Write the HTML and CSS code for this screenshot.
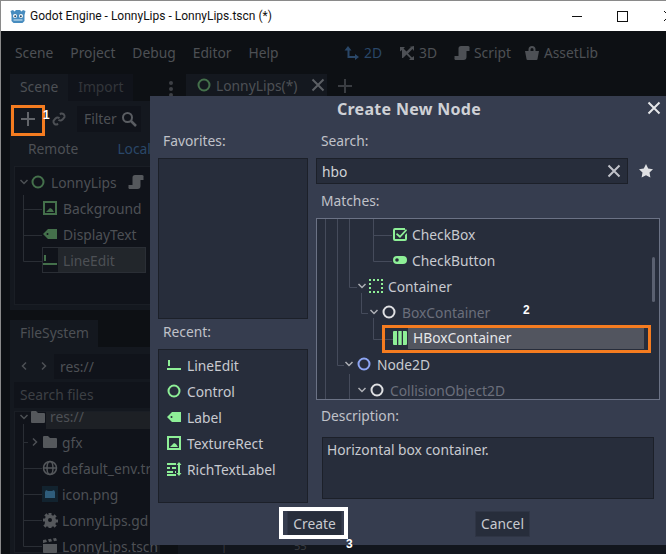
FILE: index.html
```html
<!DOCTYPE html>
<html lang="en">
<head>
  <meta charset="UTF-8">
  <title>Godot Engine - LonnyLips - LonnyLips.tscn (*)</title>
  <link rel="stylesheet" href="styles.css">
</head>
<body>
  <svg class="sprite" xmlns="http://www.w3.org/2000/svg">
    <symbol id="i-line" viewBox="0 0 16 16"><path d="M2 3h2v6H2zM1 11h14v2H1z" fill="currentColor"/></symbol>
    <symbol id="i-node" viewBox="0 0 16 16"><circle cx="8" cy="8" r="5.500" fill="none" stroke="currentColor" stroke-width="2"/></symbol>
    <symbol id="i-label" viewBox="0 0 16 16"><path fill-rule="evenodd" d="M6 3h9v10H6L1 8zM5.500 7a1 1 0 1 0 0 2 1 1 0 0 0 0-2z" fill="currentColor"/></symbol>
    <symbol id="i-tex" viewBox="0 0 16 16"><path fill-rule="evenodd" d="M1 1h14v14H1zM3 3v10h10V3z" fill="currentColor"/><path d="M4 12l3-3 1-1 2 1 2 3z" fill="currentColor"/></symbol>
    <symbol id="i-rich" viewBox="0 0 16 16"><path d="M1 2h9v2H1zM1 6h3v2H1zM6 6h4v2H6zM1 10h6v2H1zM9 10h1v2H9zM1 13h9v2H1zM13 1l2.500 3H14v8h1.500L13 15l-2.500-3H12V4h-1.500z" fill="currentColor"/></symbol>
    <symbol id="i-check" viewBox="0 0 16 16"><path d="M3 2h10v2H3v9h10V9l2-2v6a2 2 0 0 1-2 2H3a2 2 0 0 1-2-2V4a2 2 0 0 1 2-2z" fill="currentColor"/><path d="M5 7l3 2.500L14 3l1 1.500L8 12 4 8.500z" fill="currentColor"/></symbol>
    <symbol id="i-toggle" viewBox="0 0 16 16"><path fill-rule="evenodd" d="M5 4h6a4 4 0 0 1 0 8H5a4 4 0 0 1 0-8zM5 6.200a1.800 1.800 0 1 0 0 3.600 1.800 1.800 0 0 0 0-3.600z" fill="currentColor"/></symbol>
    <symbol id="i-dash" viewBox="0 0 16 16"><path d="M1 1h2v2H1zM5 1h2v2H5zM9 1h2v2H9zM13 1h2v2h-2zM1 5h2v2H1zM13 5h2v2h-2zM1 9h2v2H1zM13 9h2v2h-2zM1 13h2v2H1zM5 13h2v2H5zM9 13h2v2H9zM13 13h2v2h-2z" fill="currentColor"/></symbol>
    <symbol id="i-hbox" viewBox="0 0 16 16"><path d="M2 1h3v14H2a1 1 0 0 1-1-1V2a1 1 0 0 1 1-1zM6.300 1h3.400v14H6.300zM11 1h3a1 1 0 0 1 1 1v12a1 1 0 0 1-1 1h-3z" fill="currentColor"/></symbol>
    <symbol id="i-script" viewBox="0 0 16 16"><path d="M7 1h7a1.500 1.500 0 0 1 1.500 2v3h-3v6a3 3 0 0 1-3 3H2a1.500 1.500 0 0 1-1.500-2v-2h4V3.500A2.500 2.500 0 0 1 7 1z" fill="currentColor"/></symbol>
    <symbol id="i-bag" viewBox="0 0 16 16"><path fill-rule="evenodd" d="M8 1a3.500 3.500 0 0 1 3.500 3.500V6H15l-1.500 8a1 1 0 0 1-1 1h-9a1 1 0 0 1-1-1L1 6h3.500V4.500A3.500 3.500 0 0 1 8 1zm0 2a1.500 1.500 0 0 0-1.500 1.500V6h3V4.500A1.500 1.500 0 0 0 8 3z" fill="currentColor"/></symbol>
    <symbol id="i-2d" viewBox="0 0 16 16"><path d="M4 1l3.500 4.500H5.500V11H11V9l4 3-4 3v-2H3.500V5.500H.500z" fill="currentColor"/></symbol>
    <symbol id="i-3d" viewBox="0 0 16 16"><path d="M1 2h5L4.500 3.500 7.500 6.500 12 2H10l5-1v5l-1.500-2-4.500 4.500 4 4L15 11v4h-5l1.500-1.500-4-4L4 13h-1V5L1 6.500z" fill="currentColor"/></symbol>
    <symbol id="i-folder" viewBox="0 0 16 16"><path d="M2 2h4l2 2h6a1 1 0 0 1 1 1v8a1 1 0 0 1-1 1H2a1 1 0 0 1-1-1V3a1 1 0 0 1 1-1z" fill="currentColor"/></symbol>
    <symbol id="i-globe" viewBox="0 0 16 16"><g fill="none" stroke="currentColor" stroke-width="1.500"><circle cx="8" cy="8" r="6.500"/><ellipse cx="8" cy="8" rx="3" ry="6.500"/><path d="M1.500 8h13"/></g></symbol>
    <symbol id="i-gear" viewBox="0 0 16 16"><path fill-rule="evenodd" d="M6.500 1h3v2l1.700.7 1.400-1.400 2.100 2.100-1.400 1.400.7 1.700h2v3h-2l-.7 1.700 1.400 1.400-2.100 2.100-1.400-1.400-1.700.7v2h-3v-2l-1.700-.7-1.400 1.400-2.100-2.100 1.400-1.400L3 9.500H1v-3h2l.7-1.700-1.400-1.400 2.100-2.100 1.400 1.400L6.500 3zM8 6a2 2 0 1 0 0 4 2 2 0 0 0 0-4z" fill="currentColor"/></symbol>
    <symbol id="i-clap" viewBox="0 0 16 16"><path d="M1 6h14v8a1 1 0 0 1-1 1H2a1 1 0 0 1-1-1zM1 2l3-.5L5 4 1 5zM6 1.200L9 .7 10 3.300 7 4zM11 .5l3-.5 1 2.600-3 .7z" fill="currentColor"/></symbol>
    <symbol id="i-link" viewBox="0 0 16 16"><g fill="none" stroke="currentColor" stroke-width="2"><path d="M9 3.500l1-1a3 3 0 0 1 3.500 3.500l-2 2.500a3 3 0 0 1-4 .2"/><path d="M7 12.500l-1 1a3 3 0 0 1-3.500-3.500l2-2.500a3 3 0 0 1 4-.2"/></g></symbol>
    <symbol id="i-search" viewBox="0 0 16 16"><circle cx="6.500" cy="6.500" r="4.500" fill="none" stroke="currentColor" stroke-width="2"/><path d="M10 10l5 5" stroke="currentColor" stroke-width="2.500"/></symbol>
    <symbol id="i-x" viewBox="0 0 16 16"><path d="M2.500 2.500l11 11M13.500 2.500l-11 11" stroke="currentColor" stroke-width="2" fill="none"/></symbol>
    <symbol id="i-plus" viewBox="0 0 16 16"><path d="M7 1h2v6h6v2H9v6H7V9H1V7h6z" fill="currentColor"/></symbol>
    <symbol id="i-star" viewBox="0 0 16 16"><path d="M8 1l2.200 4.500 4.800.7-3.500 3.400.9 4.900L8 12.200l-4.400 2.300.9-4.900L1 6.200l4.800-.7z" fill="currentColor"/></symbol>
    <symbol id="i-down" viewBox="0 0 10 10"><path d="M1.500 3L5 6.500 8.500 3" fill="none" stroke="currentColor" stroke-width="1.500"/></symbol>
    <symbol id="i-right" viewBox="0 0 10 10"><path d="M3 1.500L6.500 5 3 8.500" fill="none" stroke="currentColor" stroke-width="1.500"/></symbol>
    <symbol id="i-left" viewBox="0 0 10 10"><path d="M7 1.500L3.500 5 7 8.500" fill="none" stroke="currentColor" stroke-width="1.500"/></symbol>
  </svg>

  <header class="titlebar">
    <svg class="app-icon" viewBox="0 0 16 16"><path d="M1.500 7L.500 3l2.500-1 1.500 1.500L6 2h4l1.500 1.500L13 2l2.500 1-1 4v6l-2 2h-9l-2-2z" fill="#478cbf"/><circle cx="5" cy="8" r="2" fill="#fff"/><circle cx="11" cy="8" r="2" fill="#fff"/><circle cx="5.200" cy="8.200" r="1" fill="#2f4a5e"/><circle cx="10.800" cy="8.200" r="1" fill="#2f4a5e"/><path d="M3.500 12h9" stroke="#dcecf6"/></svg>
    <span class="title-text">Godot Engine - LonnyLips - LonnyLips.tscn (*)</span>
    <div class="win-btns">
      <span class="win-min"></span>
      <span class="win-max"></span>
      <svg class="win-close" viewBox="0 0 12 12"><path d="M1 1l10 10M11 1L1 11" stroke="#111" fill="none"/></svg>
    </div>
  </header>

  <nav class="menubar">
    <div class="menus">
      <span>Scene</span><span>Project</span><span>Debug</span><span>Editor</span><span>Help</span>
    </div>
    <div class="modes">
      <span class="mode active"><svg class="ico"><use href="#i-2d"/></svg>2D</span>
      <span class="mode"><svg class="ico"><use href="#i-3d"/></svg>3D</span>
      <span class="mode"><svg class="ico"><use href="#i-script"/></svg>Script</span>
      <span class="mode"><svg class="ico"><use href="#i-bag"/></svg>AssetLib</span>
    </div>
  </nav>

  <main class="workspace">
    <aside class="dock">
      <div class="tabs">
        <span class="tab on">Scene</span>
        <span class="tab">Import</span>
      </div>
      <section class="panel scene-panel">
        <div class="tools">
          <svg class="ico tool-plus"><use href="#i-plus"/></svg>
          <svg class="ico tool-link"><use href="#i-link"/></svg>
          <div class="filter">Filter<svg class="ico"><use href="#i-search"/></svg></div>
        </div>
        <div class="remote-row"><span>Remote</span><span class="blue">Local</span></div>
        <div class="inner scene-tree">
          <svg class="guides" width="134" height="137"><path d="M8.500 28V94.500H27M8.500 42.500H27M8.500 68.500H27" fill="none" stroke="#2a2e35"/></svg>
          <div class="srow root"><svg class="arrow"><use href="#i-down"/></svg><svg class="ico green"><use href="#i-node"/></svg><span>LonnyLips</span><svg class="ico script-badge"><use href="#i-script"/></svg></div>
          <div class="srow child"><svg class="ico green"><use href="#i-tex"/></svg><span>Background</span></div>
          <div class="srow child"><svg class="ico green"><use href="#i-label"/></svg><span>DisplayText</span></div>
          <div class="srow child picked"><svg class="ico green"><use href="#i-line"/></svg><span>LineEdit</span></div>
        </div>
      </section>
      <div class="tabs fs-tabs">
        <span class="tab on">FileSystem</span>
      </div>
      <section class="panel fs-panel">
        <div class="path-row">
          <svg class="arrow"><use href="#i-left"/></svg>
          <svg class="arrow"><use href="#i-right"/></svg>
          <div class="path">res://</div>
        </div>
        <div class="search-files">Search files</div>
        <div class="inner fs-tree">
          <svg class="guides" width="134" height="142"><path d="M8.500 12V134.500H27M8.500 30.500H13M8.500 56.500H27M8.500 82.500H27M8.500 108.500H27" fill="none" stroke="#2a2e35"/></svg>
          <div class="frow root"><svg class="arrow"><use href="#i-down"/></svg><svg class="ico"><use href="#i-folder"/></svg><span>res://</span></div>
          <div class="frow child"><svg class="arrow"><use href="#i-right"/></svg><svg class="ico"><use href="#i-folder"/></svg><span>gfx</span></div>
          <div class="frow file"><svg class="ico"><use href="#i-globe"/></svg><span>default_env.tres</span></div>
          <div class="frow file"><svg class="ico icon-png" viewBox="0 0 16 16"><rect width="16" height="16" fill="#12232f"/><path d="M3 6l1-2 2 1h4l2-1 1 2v6H3z" fill="#2f5d7c"/></svg><span>icon.png</span></div>
          <div class="frow file"><svg class="ico"><use href="#i-gear"/></svg><span>LonnyLips.gd</span></div>
          <div class="frow file"><svg class="ico"><use href="#i-clap"/></svg><span>LonnyLips.tscn</span></div>
        </div>
      </section>
    </aside>

    <section class="main-area">
      <div class="dots"><i></i><i></i><i></i></div>
      <div class="scene-tab"><svg class="ico green"><use href="#i-node"/></svg><span>LonnyLips(*)</span><svg class="ico tab-x"><use href="#i-x"/></svg></div>
      <svg class="ico tab-plus"><use href="#i-plus"/></svg>
      <div class="viewport"><span class="tick">|</span><span class="ruler">55</span></div>
    </section>
  </main>

  <div class="dialog">
    <div class="dialog-title">Create New Node</div>
    <svg class="ico dialog-close"><use href="#i-x"/></svg>
    <div class="dialog-body">
      <div class="col-left">
        <label class="lbl">Favorites:</label>
        <div class="box favorites"></div>
        <label class="lbl">Recent:</label>
        <div class="box recent">
          <div class="item"><svg class="ico mint"><use href="#i-line"/></svg>LineEdit</div>
          <div class="item"><svg class="ico mint"><use href="#i-node"/></svg>Control</div>
          <div class="item"><svg class="ico mint"><use href="#i-label"/></svg>Label</div>
          <div class="item"><svg class="ico mint"><use href="#i-tex"/></svg>TextureRect</div>
          <div class="item"><svg class="ico mint"><use href="#i-rich"/></svg>RichTextLabel</div>
        </div>
      </div>
      <div class="col-right">
        <label class="lbl">Search:</label>
        <div class="search-row">
          <div class="box search-input"><span>hbo</span><svg class="ico clear"><use href="#i-x"/></svg></div>
          <svg class="ico fav"><use href="#i-star"/></svg>
        </div>
        <label class="lbl">Matches:</label>
        <div class="box matches">
          <svg class="guides" width="342" height="180"><path d="M8.500 0V180M20.500 0V146.500H27M32.500 0V68.500H40M44.500 74V94.500H51M56.500 0V42.500H75M56.500 16.500H75M56.500 99V120.500H76M32.500 155V180" fill="none" stroke="#454b5b"/></svg>
          <div class="node d4"><svg class="ico mint"><use href="#i-check"/></svg>CheckBox</div>
          <div class="node d4"><svg class="ico mint"><use href="#i-toggle"/></svg>CheckButton</div>
          <div class="node d2"><svg class="arrow"><use href="#i-down"/></svg><svg class="ico mint"><use href="#i-dash"/></svg>Container</div>
          <div class="node d3 muted"><svg class="arrow"><use href="#i-down"/></svg><svg class="ico white round"><use href="#i-node"/></svg>BoxContainer</div>
          <div class="node d4 sel"><svg class="ico mint"><use href="#i-hbox"/></svg><span class="sel-text">HBoxContainer</span></div>
          <div class="node d1"><svg class="arrow"><use href="#i-down"/></svg><svg class="ico bluei round"><use href="#i-node"/></svg>Node2D</div>
          <div class="node d2 muted"><svg class="arrow"><use href="#i-down"/></svg><svg class="ico white round"><use href="#i-node"/></svg>CollisionObject2D</div>
          <div class="scrollbar"></div>
        </div>
        <label class="lbl">Description:</label>
        <div class="box description">Horizontal box container.</div>
      </div>
    </div>
    <div class="dialog-foot">
      <button class="btn">Create</button>
      <button class="btn">Cancel</button>
    </div>
  </div>

  <div class="mark mark-add"></div>
  <div class="mark mark-node"></div>
  <div class="mark mark-create"></div>
  <span class="num num1">1</span>
  <span class="num num2">2</span>
  <span class="num num3">3</span>
</body>
</html>
```

FILE: styles.css
```css
* {
  box-sizing: border-box;
}
html, body {
  margin: 0;
  height: 554px;
  overflow: hidden;
}
body {
  position: relative;
  width: 666px;
  font-family: "Noto Sans", sans-serif;
  font-size: 13.800px;
  background: #0d1014;
  color: #4d5055;
  border-left: 1px solid #8a8a8a;
}
.sprite {
  position: absolute;
  width: 0;
  height: 0;
}
.ico {
  width: 16px;
  height: 16px;
  flex: none;
}
.arrow {
  width: 10px;
  height: 10px;
  flex: none;
}
.green {
  color: #44704b;
}
.mint {
  color: #8eef97;
}
.white {
  color: #dfe0e3;
}
.bluei {
  color: #8da5f3;
}
.blue {
  color: #2a4768;
}

/* window title */
.titlebar {
  height: 31px;
  background: #fff;
  border-top: 1px solid #8a8a8a;
  display: flex;
  align-items: center;
  padding-left: 9px;
  color: #111;
  font-family: Roboto, sans-serif;
  font-size: 12px;
}
.app-icon {
  width: 16px;
  height: 16px;
  margin-right: 4px;
}
.win-btns {
  margin-left: auto;
  display: flex;
  align-items: center;
  gap: 35px;
  margin-right: -9px;
}
.win-min {
  width: 10px;
  height: 1px;
  background: #111;
}
.win-max {
  width: 11px;
  height: 11px;
  border: 1px solid #111;
}
.win-close {
  width: 12px;
  height: 12px;
}

/* editor top bar */
.menubar {
  height: 43px;
  display: flex;
  align-items: center;
  justify-content: space-between;
  padding: 0 0 0 14px;
}
.menus {
  display: flex;
  gap: 17px;
}
.modes {
  display: flex;
  gap: 17px;
  padding-right: 68px;
}
.mode {
  display: flex;
  align-items: center;
  gap: 4px;
}
.mode:last-child {
  margin-left: -4px;
}
.mode.active {
  color: #2a4768;
}

.workspace {
  display: flex;
  height: 480px;
}
.dock {
  width: 150px;
  margin-left: 9px;
  flex: none;
}
.tabs {
  display: flex;
  height: 27px;
}
.tab {
  padding: 0 10px;
  line-height: 26px;
  color: #33363b;
  background: #10131a;
}
.tab.on {
  color: #4d5055;
  background: #14181f;
}
.panel {
  background: #14181f;
  padding: 4px;
}
.scene-panel {
  height: 209px;
}
.tools {
  height: 27px;
  display: flex;
  align-items: center;
}
.tool-plus {
  margin-left: 6px;
  color: #62656a;
}
.tool-link {
  margin-left: 15px;
  color: #4d5055;
}
.filter {
  margin-left: 10px;
  width: 64px;
  height: 26px;
  padding: 0 7px;
  background: #10131a;
  display: flex;
  align-items: center;
  gap: 4px;
  overflow: hidden;
}
.filter .ico {
  color: #5a5d62;
}
.remote-row {
  height: 34px;
  padding: 0 0 2px 14px;
  display: flex;
  align-items: center;
  gap: 39px;
}
.inner {
  position: relative;
  background: #10131a;
  border: 1px solid #1a1e25;
}
.guides {
  position: absolute;
  left: 0;
  top: 0;
}
.scene-tree {
  height: 139px;
  padding-top: 2px;
}
.srow {
  height: 26px;
  display: flex;
  align-items: center;
  position: relative;
}
.srow.root {
  padding-left: 4px;
}
.srow.root .arrow {
  margin-right: 1px;
}
.srow.root .ico {
  margin-right: 5px;
}
.srow.root .script-badge {
  margin: 0 11px 0 auto;
  color: #55585c;
}
.srow.child {
  margin-left: 27px;
}
.srow.child .ico {
  margin-right: 5px;
}
.picked {
  width: 104px;
  background: linear-gradient(to right, #10131a 16px, #22262b 16px);
  box-shadow: inset 0 0 0 1px #2a2e35;
}
.fs-tabs {
  margin-top: 10px;
}
.fs-tabs .tab {
  width: 88px;
}
.fs-panel {
  height: 207px;
  padding-top: 6px;
}
.path-row {
  height: 26px;
  display: flex;
  align-items: center;
  padding-left: 5px;
  gap: 10px;
}
.path {
  flex: 1;
  height: 25px;
  line-height: 25px;
  background: #10131a;
  padding-left: 6px;
  margin: 0 0 0 -5px;
}
.search-files {
  height: 26px;
  line-height: 26px;
  margin-top: 3px;
  padding-left: 6px;
  background: #10131a;
  color: #3d4045;
}
.fs-tree {
  margin-top: 3px;
  height: 142px;
}
.frow {
  height: 26px;
  display: flex;
  align-items: center;
  white-space: nowrap;
  position: relative;
}
.frow.root {
  height: 17px;
  padding: 0 0 8px 4px;
  background: linear-gradient(to right, transparent 31px, #1d2025 31px);
}
.frow.root .arrow {
  margin-right: 1px;
}
.frow.root .ico {
  margin-right: 4px;
}
.frow.child {
  padding-left: 15px;
}
.frow.child .arrow {
  margin-right: 2px;
}
.frow .ico {
  color: #55585c;
}
.frow.child .ico,
.frow.file .ico {
  margin-right: 4px;
}
.frow.file {
  padding-left: 27px;
}
.main-area {
  position: relative;
  flex: 1;
  display: flex;
  align-items: flex-start;
}
.dots {
  width: 5px;
  margin: 7px 0 0 9px;
  display: flex;
  flex-direction: column;
  gap: 2px;
}
.dots i {
  width: 4px;
  height: 4px;
  border-radius: 50%;
  background: #3d4045;
}
.scene-tab {
  margin-left: 12px;
  width: 141px;
  height: 22px;
  background: #14181f;
  display: flex;
  align-items: center;
  padding: 0 1px 0 10px;
  gap: 4px;
}
.tab-x {
  margin-left: auto;
  color: #5c5f64;
}
.tab-plus {
  margin: 4px 0 0 10px;
  color: #3a3d42;
}
.viewport {
  position: absolute;
  left: 18px;
  right: 0;
  top: 22px;
  bottom: 0;
  background: #12161d;
}
.tick,
.ruler {
  position: absolute;
  bottom: 0;
  line-height: 16px;
  font-size: 11px;
  color: #3a3d42;
}
.tick {
  left: 43px;
}
.ruler {
  left: 116px;
}

/* Create New Node dialog */
.dialog {
  position: absolute;
  left: 149px;
  top: 96px;
  width: 516px;
  height: 449px;
  background: #363d4f;
  color: #c8cad0;
  display: flex;
  flex-direction: column;
}
.dialog-title {
  height: 32px;
  padding: 1px 0 0 2px;
  line-height: 24px;
  text-align: center;
  font-weight: bold;
  font-size: 16px;
  letter-spacing: 0.3px;
  color: #cfd1d6;
}
.dialog-close {
  position: absolute;
  right: 4px;
  top: 4px;
  color: #e6e7ea;
}
.dialog-body {
  display: grid;
  grid-template-columns: 150px 344px;
  gap: 8px;
  padding: 0 6px 0 8px;
}
.lbl {
  display: block;
  height: 26px;
  line-height: 26px;
  padding-left: 5px;
  color: #c0c2c9;
}
.box {
  background: #272d3b;
  border: 1px solid #1c2029;
}
.col-left .lbl + .box {
  margin-top: 4px;
}
.col-right .lbl + * {
  margin-top: 4px;
}
.favorites {
  height: 161px;
}
.recent {
  height: 154px;
  padding: 2px 0 0 7px;
}
.item {
  height: 26px;
  display: flex;
  align-items: center;
  gap: 5px;
}
.search-row {
  display: flex;
  align-items: center;
}
.search-input {
  width: 312px;
  height: 26px;
  display: flex;
  align-items: center;
  justify-content: space-between;
  padding: 0 5px;
  color: #d0d2d6;
}
.clear {
  color: #c0c2c9;
}
.fav {
  margin-left: 10px;
  color: #dfe0e3;
}
.col-right .lbl:nth-of-type(2) {
  margin-top: 4px;
}
.matches {
  position: relative;
  height: 182px;
  padding-top: 2px;
  overflow: hidden;
  border-color: #6b7285;
}
.node {
  position: relative;
  height: 26px;
  display: flex;
  align-items: center;
  gap: 4px;
  white-space: nowrap;
}
.node .arrow {
  margin-right: -3px;
  color: #aeb0b6;
}
.round {
  margin: 0 1px;
}
.d1 {
  padding-left: 27px;
}
.d2 {
  padding-left: 40px;
}
.d3 {
  padding-left: 52px;
}
.d4 {
  padding-left: 75px;
}
.muted {
  color: #6b6f7b;
}
.sel {
  color: #e6e7ea;
}
.sel-text {
  position: absolute;
  left: 91px;
  right: 15px;
  top: 2px;
  bottom: 2px;
  padding-left: 5px;
  line-height: 22px;
  background: #52555f;
}
.scrollbar {
  position: absolute;
  right: 4px;
  top: 38px;
  width: 3px;
  height: 45px;
  border-radius: 2px;
  background: #5a6070;
}
.col-right .lbl:nth-of-type(3) {
  margin-top: 3px;
}
.col-right .description {
  margin: 8px 6px 0;
  height: 62px;
  padding: 2px 4px;
}
.dialog-foot {
  display: flex;
  gap: 133px;
  padding: 8px 0 0 137px;
}
.btn {
  width: 55px;
  height: 26px;
  padding: 0 0 1px;
  font: inherit;
  color: #c8cad0;
  background: #272d3b;
  border: 1px solid #2f3545;
}

/* tutorial annotations */
.mark {
  position: absolute;
}
.mark-add {
  left: 10px;
  top: 105px;
  width: 34px;
  height: 31px;
  border: 3px solid #f57c20;
}
.mark-node {
  left: 381px;
  top: 325px;
  width: 269px;
  height: 28px;
  border: 3px solid #f57c20;
}
.mark-create {
  left: 278px;
  top: 507px;
  width: 69px;
  height: 32px;
  border: 4px solid #fff;
}
.num {
  position: absolute;
  font-family: "Liberation Sans", sans-serif;
  font-size: 12px;
  font-weight: bold;
  color: #fff;
  line-height: 14px;
}
.num1 {
  left: 42px;
  top: 108px;
}
.num2 {
  left: 522px;
  top: 303px;
}
.num3 {
  left: 345px;
  top: 537px;
}
```
